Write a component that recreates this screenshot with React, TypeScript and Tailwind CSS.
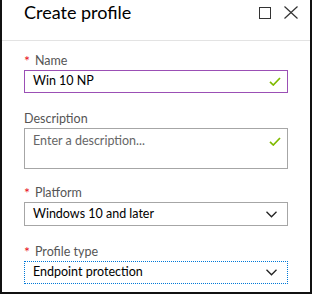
import React from 'react';

const font = { fontFamily: 'Lato, "Open Sans", Arial, sans-serif' };

function Check() {
  return (
    <svg width="12" height="9" viewBox="0 0 12 9" className="shrink-0">
      <path d="M1 4.8 L4.3 8 L11 1" fill="none" stroke="#7fba00" strokeWidth="1.7" />
    </svg>
  );
}

function Chevron() {
  return (
    <svg width="11" height="7" viewBox="0 0 11 7" className="shrink-0">
      <path d="M0.5 0.8 L5.5 5.8 L10.5 0.8" fill="none" stroke="#222" strokeWidth="1.3" />
    </svg>
  );
}

function Label({ text, required }: { text: string; required?: boolean }) {
  return (
    <div className="flex h-[18px] items-center text-[12.5px] leading-[18px] text-[#555]">
      {required && <span className="mr-[5px] text-[14px] text-[#e81123]">*</span>}
      <span>{text}</span>
    </div>
  );
}

export default function App() {
  return (
    <div className="h-[298px] w-[312px] bg-white" style={font}>
      <div className="flex h-[294px] w-[312px] flex-col border-x-2 border-b-2 border-[#111]">
        {/* Header */}
        <div className="flex h-[41px] items-start border-b border-[#e3e3e3] pl-[22px] pr-[7px]">
          <h1 className="flex-1 text-[18px] leading-[25px] text-black">Create profile</h1>
          <button className="flex h-[25px] w-[24px] items-center justify-center">
            <span className="block h-[12px] w-[12px] border border-[#333]" />
          </button>
          <button className="ml-[2px] flex h-[25px] w-[24px] items-center justify-center">
            <svg width="14" height="13" viewBox="0 0 14 13">
              <path d="M0.5 0.5 L13.5 12.5 M13.5 0.5 L0.5 12.5" stroke="#333" strokeWidth="1.2" />
            </svg>
          </button>
        </div>

        <div className="flex flex-col px-[22px] pt-[11px]">
          <Label text="Name" required />
          <div className="flex h-[23px] items-center border border-[#9b4fb5] pl-[8px] pr-[6px] text-[12.5px] text-black">
            <span className="flex-1">Win 10 NP</span>
            <Check />
          </div>

          <div className="mt-[17px]">
            <Label text="Description" />
          </div>
          <div className="flex h-[41px] items-start border border-[#a6a6a6] pl-[8px] pr-[6px] pt-[3px] text-[12.5px] text-[#666]">
            <span className="flex-1 leading-[18px]">Enter a description...</span>
            <span className="mt-[5px]">
              <Check />
            </span>
          </div>

          <div className="mt-[15px]">
            <Label text="Platform" required />
          </div>
          <div className="flex h-[24px] items-center border border-[#a6a6a6] pl-[8px] pr-[10px] text-[12.5px] text-black">
            <span className="flex-1">Windows 10 and later</span>
            <Chevron />
          </div>

          <div className="mt-[17px]">
            <Label text="Profile type" required />
          </div>
          <div className="flex h-[23px] items-center border border-dotted border-[#0078d7] pl-[8px] pr-[10px] text-[12.5px] text-black">
            <span className="flex-1">Endpoint protection</span>
            <Chevron />
          </div>
        </div>
      </div>
    </div>
  );
}
